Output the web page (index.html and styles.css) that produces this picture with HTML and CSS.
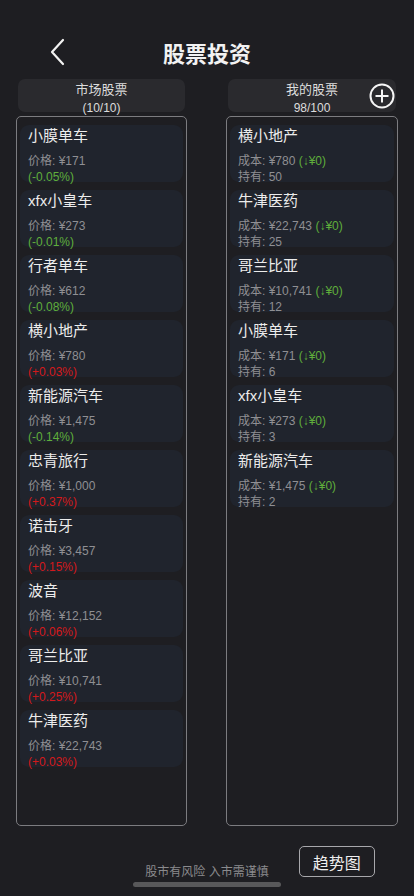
FILE: index.html
```html
<!DOCTYPE html>
<html lang="zh-CN">
<head>
    <meta charset="UTF-8">
    <meta name="viewport" content="width=device-width, initial-scale=1.0">
    <title>股票投资</title>
    <link rel="stylesheet" href="styles.css">
</head>
<body>
    <div class="screen">
        <div class="nav">
            <a class="back" href="#">
                <svg width="16" height="28" viewBox="0 0 16 28">
                    <path d="M14 2 L3 14 L14 26" fill="none" stroke="#f2f2f2" stroke-width="2.2" stroke-linecap="round" stroke-linejoin="round"/>
                </svg>
            </a>
            <h1>股票投资</h1>
            <div></div>
        </div>

        <div class="columns">
            <div class="column">
                <div class="col-header">
                    <div class="col-title">市场股票</div>
                    <div class="col-count">(10/10)</div>
                </div>
                <div class="list" id="market-list"></div>
            </div>
            <div class="column">
                <div class="col-header">
                    <div class="col-title">我的股票</div>
                    <div class="col-count">98/100</div>
                    <button class="add-btn">
                        <svg width="26" height="26" viewBox="0 0 26 26">
                            <circle cx="13" cy="13" r="11.5" fill="none" stroke="#f5f5f5" stroke-width="2"/>
                            <path d="M13 6.5 V19.5 M6.5 13 H19.5" stroke="#f5f5f5" stroke-width="2"/>
                        </svg>
                    </button>
                </div>
                <div class="list" id="my-list"></div>
            </div>
        </div>

        <div class="bottom">
            <div></div>
            <div class="disclaimer">股市有风险 入市需谨慎</div>
            <div><button class="trend-btn">趋势图</button></div>
        </div>

        <div class="home-bar"></div>
    </div>

    <script>
        // market stocks
        const market = [
            { name: '小膜单车', price: 171, change: -0.05 },
            { name: 'xfx小皇车', price: 273, change: -0.01 },
            { name: '行者单车', price: 612, change: -0.08 },
            { name: '横小地产', price: 780, change: 0.03 },
            { name: '新能源汽车', price: 1475, change: -0.14 },
            { name: '忠青旅行', price: 1000, change: 0.37 },
            { name: '诺击牙', price: 3457, change: 0.15 },
            { name: '波音', price: 12152, change: 0.06 },
            { name: '哥兰比亚', price: 10741, change: 0.25 },
            { name: '牛津医药', price: 22743, change: 0.03 }
        ];

        // my holdings
        const mine = [
            { name: '横小地产', cost: 780, hold: 50 },
            { name: '牛津医药', cost: 22743, hold: 25 },
            { name: '哥兰比亚', cost: 10741, hold: 12 },
            { name: '小膜单车', cost: 171, hold: 6 },
            { name: 'xfx小皇车', cost: 273, hold: 3 },
            { name: '新能源汽车', cost: 1475, hold: 2 }
        ];

        function money(n) {
            return '¥' + n.toLocaleString('en-US');
        }

        const marketList = document.getElementById('market-list');
        market.forEach(stock => {
            const card = document.createElement('div');
            card.className = 'card';
            const up = stock.change > 0;
            const pct = (up ? '+' : '') + stock.change.toFixed(2) + '%';
            card.innerHTML = `
                <div class="name">${stock.name}</div>
                <div class="info">价格: ${money(stock.price)}</div>
                <div class="info ${up ? 'up' : 'down'}">(${pct})</div>
            `;
            marketList.appendChild(card);
        });

        const myList = document.getElementById('my-list');
        mine.forEach(stock => {
            const card = document.createElement('div');
            card.className = 'card';
            card.innerHTML = `
                <div class="name">${stock.name}</div>
                <div class="info">成本: ${money(stock.cost)} <span class="down">(↓¥0)</span></div>
                <div class="info">持有: ${stock.hold}</div>
            `;
            myList.appendChild(card);
        });
    </script>
</body>
</html>
```

FILE: styles.css
```css
body {
    margin: 0;
    background-color: #1e1e22;
    font-family: "Liberation Sans", "Noto Sans CJK SC", sans-serif;
    color: #e8e8e8;
}

.screen {
    position: relative;
    width: 414px;
    height: 896px;
    overflow: hidden;
}

.nav {
    display: grid;
    grid-template-columns: 1fr auto 1fr;
    align-items: center;
    padding-top: 38px;
    height: 28px;
    margin-bottom: 13px;
}

.back {
    display: flex;
    padding-left: 49px;
}

.nav h1 {
    margin: 0;
    font-size: 22px;
    font-weight: bold;
    line-height: 28px;
    color: #f2f2f2;
    font-family: "Noto Sans CJK SC", sans-serif;
}

.columns {
    display: grid;
    grid-template-columns: 171px 172px;
    column-gap: 39px;
    padding-left: 16px;
}

.col-header {
    position: relative;
    margin: 0 2px 4px;
    height: 33px;
    background: #2a2a2e;
    border-radius: 7px;
    text-align: center;
}

.col-title {
    padding-top: 2px;
    font-size: 13px;
    line-height: 18px;
    color: #dcdcdc;
}

.col-count {
    font-size: 12px;
    line-height: 18px;
    color: #dcdcdc;
}

.add-btn {
    position: absolute;
    right: 1px;
    top: 4px;
    padding: 0;
    border: none;
    background: none;
    width: 26px;
    height: 26px;
}

.list {
    box-sizing: border-box;
    height: 710px;
    border: 1px solid #7c7c80;
    border-radius: 5px;
    padding: 8px 3px 0;
    display: flex;
    flex-direction: column;
    gap: 8px;
}

.card {
    height: 57px;
    flex-shrink: 0;
    box-sizing: border-box;
    padding: 1px 0 0 8px;
    background: #20242d;
    border-radius: 9px;
}

.name {
    font-size: 15px;
    line-height: 20px;
    color: #ececec;
    margin-bottom: 7px;
}

.info {
    font-size: 12px;
    line-height: 16px;
    color: #8f8f93;
}

.down {
    color: #5fae3b;
}

.up {
    color: #d3191b;
}

.bottom {
    display: grid;
    grid-template-columns: 1fr auto 1fr;
    margin-top: 20px;
    height: 33px;
}

.disclaimer {
    align-self: end;
    font-size: 12px;
    line-height: 14px;
    color: #8a8a8d;
}

.trend-btn {
    margin-left: 30px;
    width: 76px;
    height: 31px;
    box-sizing: border-box;
    border: 1.5px solid #a8a8ac;
    border-radius: 5px;
    background: transparent;
    color: #efefef;
    font-size: 16px;
    font-family: "Noto Sans CJK SC", sans-serif;
    padding: 0;
}

.home-bar {
    position: absolute;
    left: 133px;
    bottom: 9px;
    width: 148px;
    height: 5px;
    border-radius: 3px;
    background: #58585a;
}
```
